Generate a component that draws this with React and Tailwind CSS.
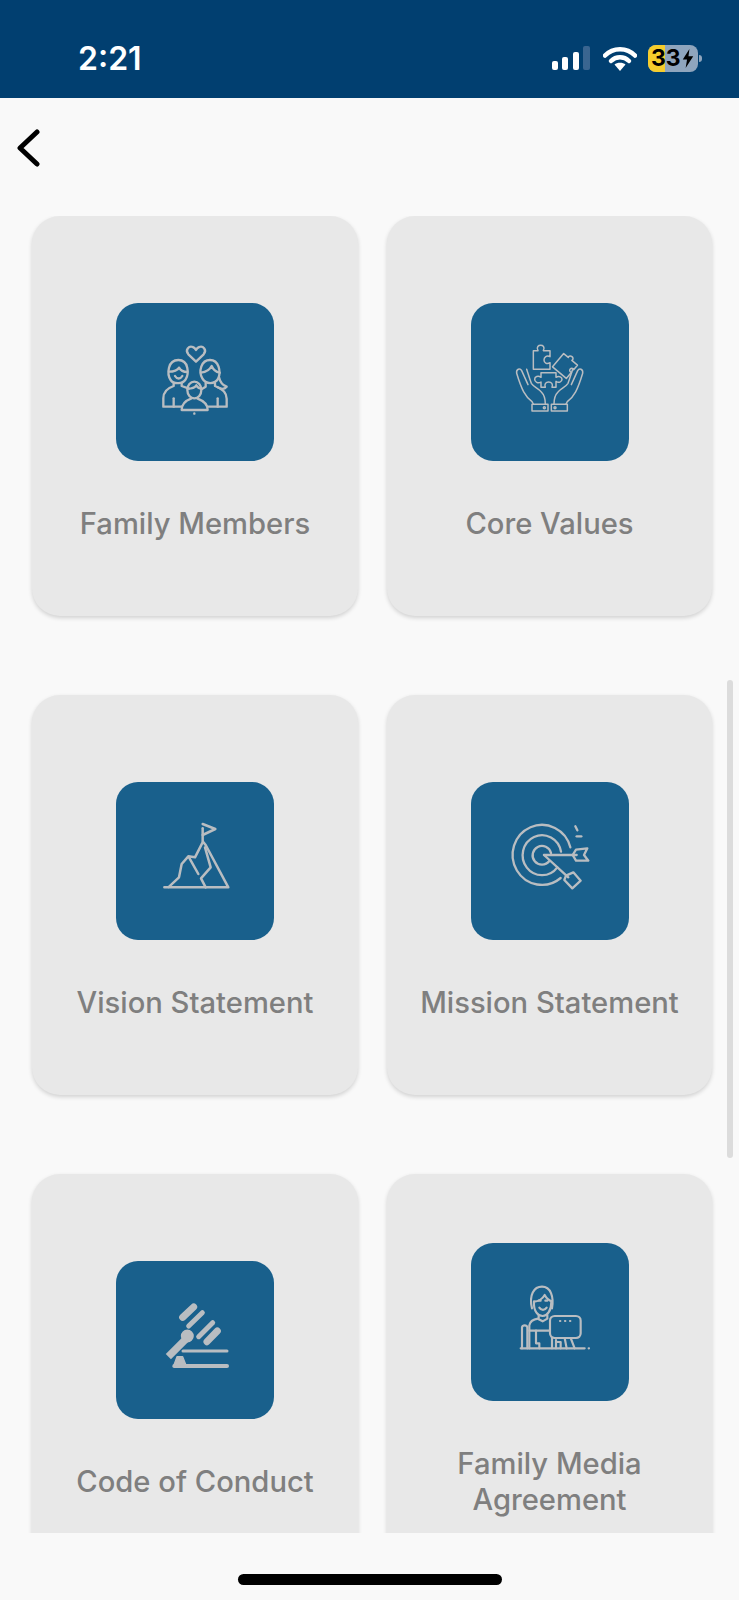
const iconColor = "#b9bdc1";

function Line({ children, w = 5 }) {
  return (
    <g fill="none" stroke={iconColor} strokeWidth={w} strokeLinecap="round" strokeLinejoin="round">
      {children}
    </g>
  );
}

function FamilyIcon() {
  return (
    <Line w={7}>
      <path d="M243 185 L220 163 C209 150 222 137 233 141 C238 142 241 146 243 150 C245 146 248 142 253 141 C264 137 277 150 266 163 Z" />
      <path d="M167 240 C155 222 158 180 190 180 C222 180 222 222 212 238 C204 252 176 254 167 240 Z" />
      <path d="M162 215 C175 215 190 210 192 203 C197 212 208 216 217 216" />
      <path d="M180 228 C186 238 196 238 202 228" />
      <path d="M176 250 L176 258 C158 264 145 274 145 295 L145 320 L200 320" />
      <path d="M200 250 L200 258 L222 266" />
      <path d="M176 295 L176 320" />
      <path d="M262 235 C250 215 258 180 285 180 C312 180 318 215 310 235 C300 254 272 254 262 235 Z" />
      <path d="M258 218 C275 216 285 208 290 198 C295 210 303 216 314 218" />
      <path d="M312 232 C315 245 322 256 335 260 C328 268 318 268 308 262" />
      <path d="M272 250 L272 260 L262 266" />
      <path d="M300 250 L300 258 C322 266 335 276 335 296 L335 320 L280 320" />
      <path d="M308 295 L308 320" />
      <ellipse cx="238" cy="270" rx="21" ry="25" />
      <path d="M218 266 C228 266 240 262 244 256 C248 262 252 266 259 266" />
      <path d="M228 296 C212 302 200 310 200 330 L278 330 C278 310 264 302 248 296" />
      <path d="M238 340 L238 341" />
    </Line>
  );
}

function ValuesIcon() {
  return (
    <Line w={4.5}>
      <path d="M190 152 L204 152 C198 140 206 136 212 136 C218 136 226 140 220 152 L240 152 L240 170 C230 164 222 172 222 180 C222 188 230 194 240 188 L240 208 L190 208 Z" />
      <path
        transform="rotate(40 285 198)"
        d="M258 172 L276 172 C272 160 294 160 290 172 L312 172 L312 190 C300 184 300 206 312 200 L312 224 L258 224 Z"
      />
      <path d="M213 218 L258 218 L258 232 C268 226 276 232 276 238 C276 246 266 250 258 244 L258 262 L246 262 C250 252 244 246 236 246 C228 246 222 252 226 262 L213 262 L213 246 C204 252 194 246 194 238 C194 230 204 226 213 232 Z" />
      <path d="M190 312 L186 305 C166 290 155 270 140 220 C138 207 150 203 155 212 L174 254 M170 208 C174 220 178 234 184 250 C192 262 204 264 214 276 C224 286 226 298 226 312" />
      <path d="M288 312 L292 305 C312 290 323 270 338 220 C340 207 328 203 323 212 L304 254 M308 208 C304 220 300 234 294 250 C286 262 274 264 264 276 C254 286 252 298 252 312" />
      <rect x="186" y="313" width="48" height="20" />
      <rect x="244" y="313" width="48" height="20" />
      <circle cx="223" cy="323" r="3" />
      <circle cx="255" cy="323" r="3" />
    </Line>
  );
}

function VisionIcon() {
  return (
    <Line w={7.5}>
      <path d="M263 186 L263 148" />
      <path d="M263 135 L301 150 L263 168" />
      <path d="M148 325 L340 325 L272 198 L264 188 L240 235 L220 232 L200 255 L192 295 L160 325" />
      <path d="M222 235 L250 285" />
      <path d="M270 205 L287 265 L258 298 L272 325" />
    </Line>
  );
}

function MissionIcon() {
  return (
    <Line w={7}>
      <path d="M301 205 A88 90 0 1 0 272 297" />
      <path d="M273 218 A58 60 0 1 0 262 265" />
      <path d="M243 222 A28 28 0 1 0 238 246" />
      <path d="M222 228 L320 228" />
      <path d="M222 228 L295 295" />
      <path d="M318 212 L352 208 L342 228 L355 245 L318 245 L308 228 Z" />
      <path d="M288 290 L310 280 L332 305 L307 328 L283 303 Z" />
      <path d="M316 142 L322 154" />
      <path d="M320 172 L334 172" />
    </Line>
  );
}

function ConductIcon() {
  return (
    <g fill="none" stroke={iconColor} strokeLinecap="round" strokeLinejoin="round">
      <path d="M203 172 L236 141" strokeWidth="21" />
      <path d="M221 198 L262 158" strokeWidth="15" />
      <path d="M251 230 L293 188" strokeWidth="15" />
      <path d="M276 245 L307 213" strokeWidth="21" />
      <path d="M160 290 L220 230" strokeWidth="22" strokeLinecap="butt" />
      <circle cx="217" cy="228" r="17" fill={iconColor} strokeWidth="5" />
      <path d="M204 273 L336 273" strokeWidth="9" />
      <path d="M178 318 L336 318" strokeWidth="12" />
      <path d="M175 320 L186 290 L203 290 L213 316 Z" fill={iconColor} strokeWidth="4" />
    </g>
  );
}

function MediaIcon() {
  return (
    <Line w={6.5}>
      <path d="M186 205 C176 165 192 140 216 140 C242 140 252 170 246 205" />
      <path d="M192 185 C205 185 218 176 224 165 C230 176 238 182 246 184" />
      <path d="M192 185 C190 215 205 228 218 228 C232 228 244 212 244 185" />
      <path d="M208 203 C214 212 224 212 230 203" />
      <path d="M206 182 L212 182 M226 182 L232 182" />
      <path d="M206 226 L206 238 L218 244 L232 236 L232 226" />
      <path d="M204 236 C192 238 180 242 178 256 L178 325" />
      <path d="M178 272 L238 272" />
      <path d="M198 272 L198 310 L208 310 L208 325" />
      <path d="M156 262 L156 325 M156 262 C158 254 170 254 172 262 L172 325" />
      <rect x="240" y="228" width="92" height="66" rx="14" />
      <path d="M270 243 L271 243 M285 243 L286 243 M300 243 L301 243" />
      <path d="M284 294 L290 325 M302 294 L314 325" />
      <path d="M246 296 L246 325 M258 300 L258 325 M258 306 L272 306 L272 325" />
      <path d="M152 325 L344 325" />
      <path d="M356 325 L357 325" />
    </Line>
  );
}

const cards = [
  { label: ["Family Members"], Icon: FamilyIcon, box: "3 9 474 474" },
  { label: ["Core Values"], Icon: ValuesIcon, box: "3 9 474 474" },
  { label: ["Vision Statement"], Icon: VisionIcon, box: "3 9 474 474" },
  { label: ["Mission Statement"], Icon: MissionIcon, box: "3 9 474 474" },
  { label: ["Code of Conduct"], Icon: ConductIcon, box: "3 3 474 474" },
  { label: ["Family Media", "Agreement"], Icon: MediaIcon, box: "3 9 474 474" },
];

function Card({ label, Icon, box }) {
  return (
    <div className="flex h-[400px] flex-col items-center justify-center rounded-[28px] bg-[#e8e8e8] pt-[13px] shadow-[0_2px_4px_rgba(0,0,0,0.16)]">
      <div className="h-[158px] w-[158px] shrink-0 overflow-hidden rounded-[22px] bg-[#19608c]">
        <svg viewBox={box} className="h-full w-full">
          <Icon />
        </svg>
      </div>
      <div className="mt-[45px] text-center text-[29.2px] leading-[36px] font-medium text-[#7f7f7f]">
        {label.map((line) => (
          <div key={line}>{line}</div>
        ))}
      </div>
    </div>
  );
}

function StatusIcons() {
  return (
    <div className="flex items-center">
      <svg width="40" height="26" viewBox="0 0 40 26" className="mr-[11px]">
        <rect x="0" y="15" width="6" height="9" rx="2" fill="#fff" />
        <rect x="10" y="11" width="6" height="13" rx="2" fill="#fff" />
        <rect x="21" y="6" width="6" height="18" rx="2" fill="#fff" />
        <rect x="31" y="0" width="7" height="24" rx="2" fill="#3a6590" />
      </svg>
      <svg width="34" height="26" viewBox="0 0 34 26" className="mr-[11px]">
        <path d="M2 9.5 C10 1 24 1 32 9.5" fill="none" stroke="#fff" strokeWidth="4.5" strokeLinecap="round" />
        <path d="M8 15 C13 10 21 10 26 15" fill="none" stroke="#fff" strokeWidth="4.5" strokeLinecap="round" />
        <path d="M11.5 18.5 C14 16 20 16 22.5 18.5 L17 25 Z" fill="#fff" />
      </svg>
      <div className="relative flex h-[27px] w-[50px] items-center rounded-[8px] bg-[#8fa5bd]">
        <div className="h-full w-[17px] rounded-l-[8px] bg-[#f6cd2c]" />
        <div className="absolute inset-0 flex items-center pl-[3px] text-[23px] leading-none font-bold text-black">
          <span>33</span>
          <svg width="14" height="19" viewBox="0 0 12 20">
            <path d="M7.5 0 L0.5 11 L5 11 L3.5 20 L11.5 7.5 L6.5 7.5 Z" fill="#000" />
          </svg>
        </div>
      </div>
      <div className="ml-[1px] h-[7px] w-[3px] rounded-r-full bg-[#8fa5bd]" />
    </div>
  );
}

export default function App() {
  return (
    <div className="relative flex h-[1600px] w-[739px] flex-col overflow-hidden bg-[#f9f9f9] font-['Inter',sans-serif]">
      <header className="flex h-[98px] shrink-0 items-start justify-between bg-[#013f70] pt-[45px] pr-[37px] pl-[78px]">
        <span className="text-[32px] leading-[28px] font-semibold text-white">2:21</span>
        <StatusIcons />
      </header>

      <div className="flex h-[118px] shrink-0 items-start pt-[31px] pl-[17px]">
        <svg width="24" height="38" viewBox="0 0 24 38">
          <path d="M20 3 L3 19 L20 35" fill="none" stroke="#000" strokeWidth="5" strokeLinecap="round" strokeLinejoin="round" />
        </svg>
      </div>

      <main className="h-[1317px] shrink-0 overflow-hidden">
        <div className="grid grid-cols-[326px_325px] gap-x-[29px] gap-y-[79px] pl-[32px]">
          {cards.map((c) => (
            <Card key={c.label[0]} {...c} />
          ))}
        </div>
      </main>

      <div className="flex flex-1 justify-center pt-[41px]">
        <div className="h-[11px] w-[264px] rounded-full bg-black" />
      </div>

      <div className="absolute top-[680px] right-[6px] h-[478px] w-[6px] rounded-full bg-[#dcdcdc]" />
    </div>
  );
}
